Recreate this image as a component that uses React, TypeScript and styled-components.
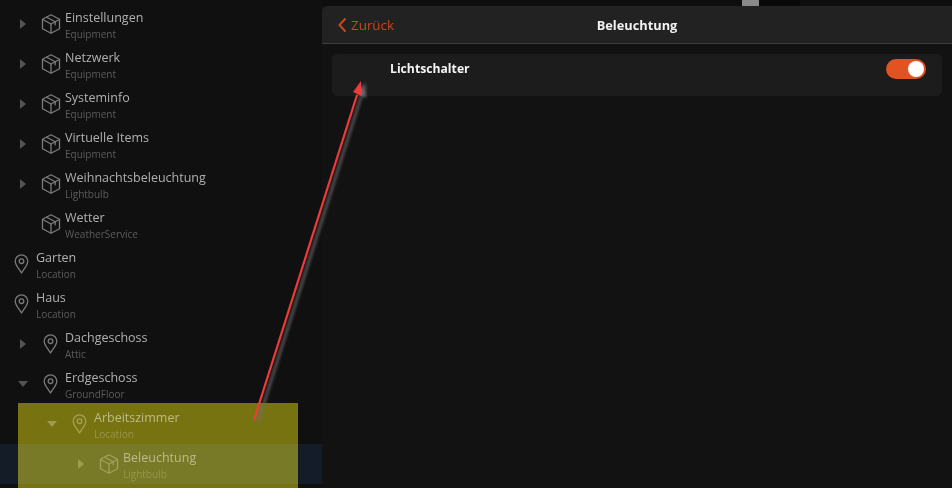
import React from 'react';
import styled, { createGlobalStyle } from 'styled-components';

const GlobalStyle = createGlobalStyle`
  html, body {
    margin: 0;
    padding: 0;
    height: 100%;
    background: #111;
    overflow: hidden;
  }
  #root {
    height: 100%;
  }
`;

const Page = styled.div`
  position: relative;
  width: 952px;
  height: 488px;
  display: flex;
  overflow: hidden;
  background: #121212;
  font-family: 'Open Sans', 'Noto Sans', Arial, sans-serif;
`;

const Sidebar = styled.nav`
  width: 322px;
  flex-shrink: 0;
  padding-top: 4px;
  background: #101010;
  box-sizing: border-box;
`;

const Row = styled.div<{ $selected?: boolean }>`
  height: 40px;
  display: flex;
  align-items: center;
  padding-left: 7px;
  background: ${(p) => (p.$selected ? '#141c28' : 'transparent')};
`;

const Indent = styled.div<{ $level: number }>`
  width: ${(p) => p.$level * 29}px;
  flex-shrink: 0;
  display: flex;
  justify-content: flex-end;
`;

const CaretSlot = styled.div`
  width: 29px;
  height: 40px;
  display: flex;
  align-items: center;
  justify-content: center;
`;

const CaretRight = styled.span`
  width: 0;
  height: 0;
  margin-left: 2px;
  border-top: 5px solid transparent;
  border-bottom: 5px solid transparent;
  border-left: 6px solid #535353;
`;

const CaretDown = styled.span`
  width: 0;
  height: 0;
  margin-left: 2px;
  border-left: 5.5px solid transparent;
  border-right: 5.5px solid transparent;
  border-top: 6px solid #535353;
`;

const IconSlot = styled.div<{ $dim?: boolean }>`
  width: 29px;
  height: 40px;
  flex-shrink: 0;
  display: flex;
  align-items: center;
  justify-content: center;
  color: ${(p) => (p.$dim ? '#5c5c5c' : '#7c7c7c')};
`;

const RowText = styled.div`
  min-width: 0;
  padding-top: 4px;
  display: flex;
  flex-direction: column;
`;

const RowTitle = styled.div<{ $dim?: boolean }>`
  font-size: 12.5px;
  line-height: 17px;
  color: ${(p) => (p.$dim ? '#8a8a8a' : '#b0b0b0')};
  white-space: nowrap;
`;

const RowSub = styled.div<{ $dim?: boolean }>`
  font-size: 10px;
  line-height: 17px;
  color: ${(p) => (p.$dim ? '#4a4a4a' : '#5c5c5c')};
  white-space: nowrap;
`;

const Main = styled.main`
  flex: 1;
  min-width: 0;
  display: flex;
  flex-direction: column;
`;

const TopStrip = styled.div`
  height: 6px;
  flex-shrink: 0;
  display: flex;
  padding-left: 420px;
  background: #0e0e0e;
`;

const ScrollThumb = styled.div`
  width: 17px;
  background: #8a8a8a;
`;

const ScrollTrack = styled.div`
  width: 41px;
  background: #090909;
`;

const Header = styled.header`
  height: 38px;
  flex-shrink: 0;
  box-sizing: border-box;
  display: grid;
  grid-template-columns: 1fr auto 1fr;
  align-items: center;
  padding: 0 16px;
  background: #222;
  border-bottom: 1px solid #3c3c3c;
  border-top-left-radius: 5px;
`;

const BackLink = styled.a`
  display: flex;
  align-items: center;
  gap: 5px;
  font-size: 13.4px;
  color: #c4481e;
`;

const Title = styled.div`
  font-size: 12.8px;
  font-weight: 700;
  color: #f2f2f2;
`;

const Content = styled.div`
  padding: 10px;
`;

const Card = styled.div`
  height: 42px;
  box-sizing: border-box;
  display: flex;
  align-items: flex-start;
  justify-content: space-between;
  padding: 5px 16px 0 58px;
  background: #1c1c1c;
  border-radius: 5px;
`;

const CardLabel = styled.div`
  font-size: 12.2px;
  line-height: 18px;
  margin-top: 1px;
  font-weight: 700;
  color: #f5f5f5;
`;

const Toggle = styled.div`
  width: 40px;
  height: 20px;
  box-sizing: border-box;
  padding: 2px;
  display: flex;
  justify-content: flex-end;
  background: #e35322;
  border-radius: 10px;
`;

const Knob = styled.div`
  width: 16px;
  height: 16px;
  background: #fff;
  border-radius: 50%;
`;

const Highlight = styled.div`
  position: absolute;
  left: 18px;
  top: 403px;
  width: 280px;
  height: 85px;
  background: rgb(110, 106, 0);
  mix-blend-mode: screen;
`;

const ArrowLayer = styled.svg`
  position: absolute;
  left: 0;
  top: 0;
  pointer-events: none;
`;

const BoxIcon = () => (
  <svg width="20" height="20" viewBox="0 0 20 20" fill="none" stroke="currentColor" strokeWidth="1.3" strokeLinejoin="round" strokeLinecap="round">
    <path d="M10 .8 18.500 5.300v9.400L10 19.200 1.500 14.700V5.300Z" />
    <path d="M1.700 5.500 10 10l8.300-4.500" />
    <path d="M10 10v9" />
    <path d="M5.700 3.200 14.200 7.800v3" />
  </svg>
);

const PinIcon = () => (
  <svg width="15" height="20" viewBox="0 0 15 20" fill="none" stroke="currentColor" strokeWidth="1.3" strokeLinejoin="round">
    <path d="M7.500 19C5.500 15.500 1.200 11.200 1.200 7.200a6.300 6.300 0 0 1 12.600 0C13.800 11.200 9.500 15.500 7.500 19Z" />
    <circle cx="7.500" cy="7.200" r="2.300" />
  </svg>
);

type TreeNode = {
  title: string;
  sub: string;
  level: number;
  icon: 'box' | 'pin';
  caret?: 'right' | 'down';
  selected?: boolean;
  dim?: boolean;
};

const nodes: TreeNode[] = [
  { title: 'Einstellungen', sub: 'Equipment', level: 1, icon: 'box', caret: 'right' },
  { title: 'Netzwerk', sub: 'Equipment', level: 1, icon: 'box', caret: 'right' },
  { title: 'Systeminfo', sub: 'Equipment', level: 1, icon: 'box', caret: 'right' },
  { title: 'Virtuelle Items', sub: 'Equipment', level: 1, icon: 'box', caret: 'right' },
  { title: 'Weihnachtsbeleuchtung', sub: 'Lightbulb', level: 1, icon: 'box', caret: 'right' },
  { title: 'Wetter', sub: 'WeatherService', level: 1, icon: 'box' },
  { title: 'Garten', sub: 'Location', level: 0, icon: 'pin' },
  { title: 'Haus', sub: 'Location', level: 0, icon: 'pin' },
  { title: 'Dachgeschoss', sub: 'Attic', level: 1, icon: 'pin', caret: 'right' },
  { title: 'Erdgeschoss', sub: 'GroundFloor', level: 1, icon: 'pin', caret: 'down' },
  { title: 'Arbeitszimmer', sub: 'Location', level: 2, icon: 'pin', caret: 'down', dim: true },
  { title: 'Beleuchtung', sub: 'Lightbulb', level: 3, icon: 'box', caret: 'right', selected: true, dim: true },
];

export default function App() {
  return (
    <>
      <GlobalStyle />
      <Page>
        <Sidebar>
          {nodes.map((n) => (
            <Row key={n.title} $selected={n.selected}>
              <Indent $level={n.level}>
                {n.caret && (
                  <CaretSlot>{n.caret === 'right' ? <CaretRight /> : <CaretDown />}</CaretSlot>
                )}
              </Indent>
              <IconSlot $dim={n.dim}>{n.icon === 'box' ? <BoxIcon /> : <PinIcon />}</IconSlot>
              <RowText>
                <RowTitle $dim={n.dim}>{n.title}</RowTitle>
                <RowSub $dim={n.dim}>{n.sub}</RowSub>
              </RowText>
            </Row>
          ))}
        </Sidebar>
        <Main>
          <TopStrip>
            <ScrollThumb />
            <ScrollTrack />
          </TopStrip>
          <Header>
            <BackLink>
              <svg width="8" height="14" viewBox="0 0 8 14" fill="none" stroke="currentColor" strokeWidth="2" strokeLinecap="round" strokeLinejoin="round">
                <path d="M7 1 1.500 7 7 13" />
              </svg>
              Zurück
            </BackLink>
            <Title>Beleuchtung</Title>
          </Header>
          <Content>
            <Card>
              <CardLabel>Lichtschalter</CardLabel>
              <Toggle>
                <Knob />
              </Toggle>
            </Card>
          </Content>
        </Main>
        <Highlight />
        <ArrowLayer width="952" height="488" viewBox="0 0 952 488">
          <defs>
            <filter id="arrow-shadow" x="-50%" y="-10%" width="200%" height="120%">
              <feDropShadow dx="4" dy="2" stdDeviation="1.500" floodColor="#707070" floodOpacity="0.9" />
            </filter>
          </defs>
          <g filter="url(#arrow-shadow)">
            <path d="M254 420 357 95" stroke="#f03a3a" strokeWidth="2.200" fill="none" />
            <path d="M361 81 362 96 353 92Z" fill="#f03a3a" />
          </g>
        </ArrowLayer>
      </Page>
    </>
  );
}
